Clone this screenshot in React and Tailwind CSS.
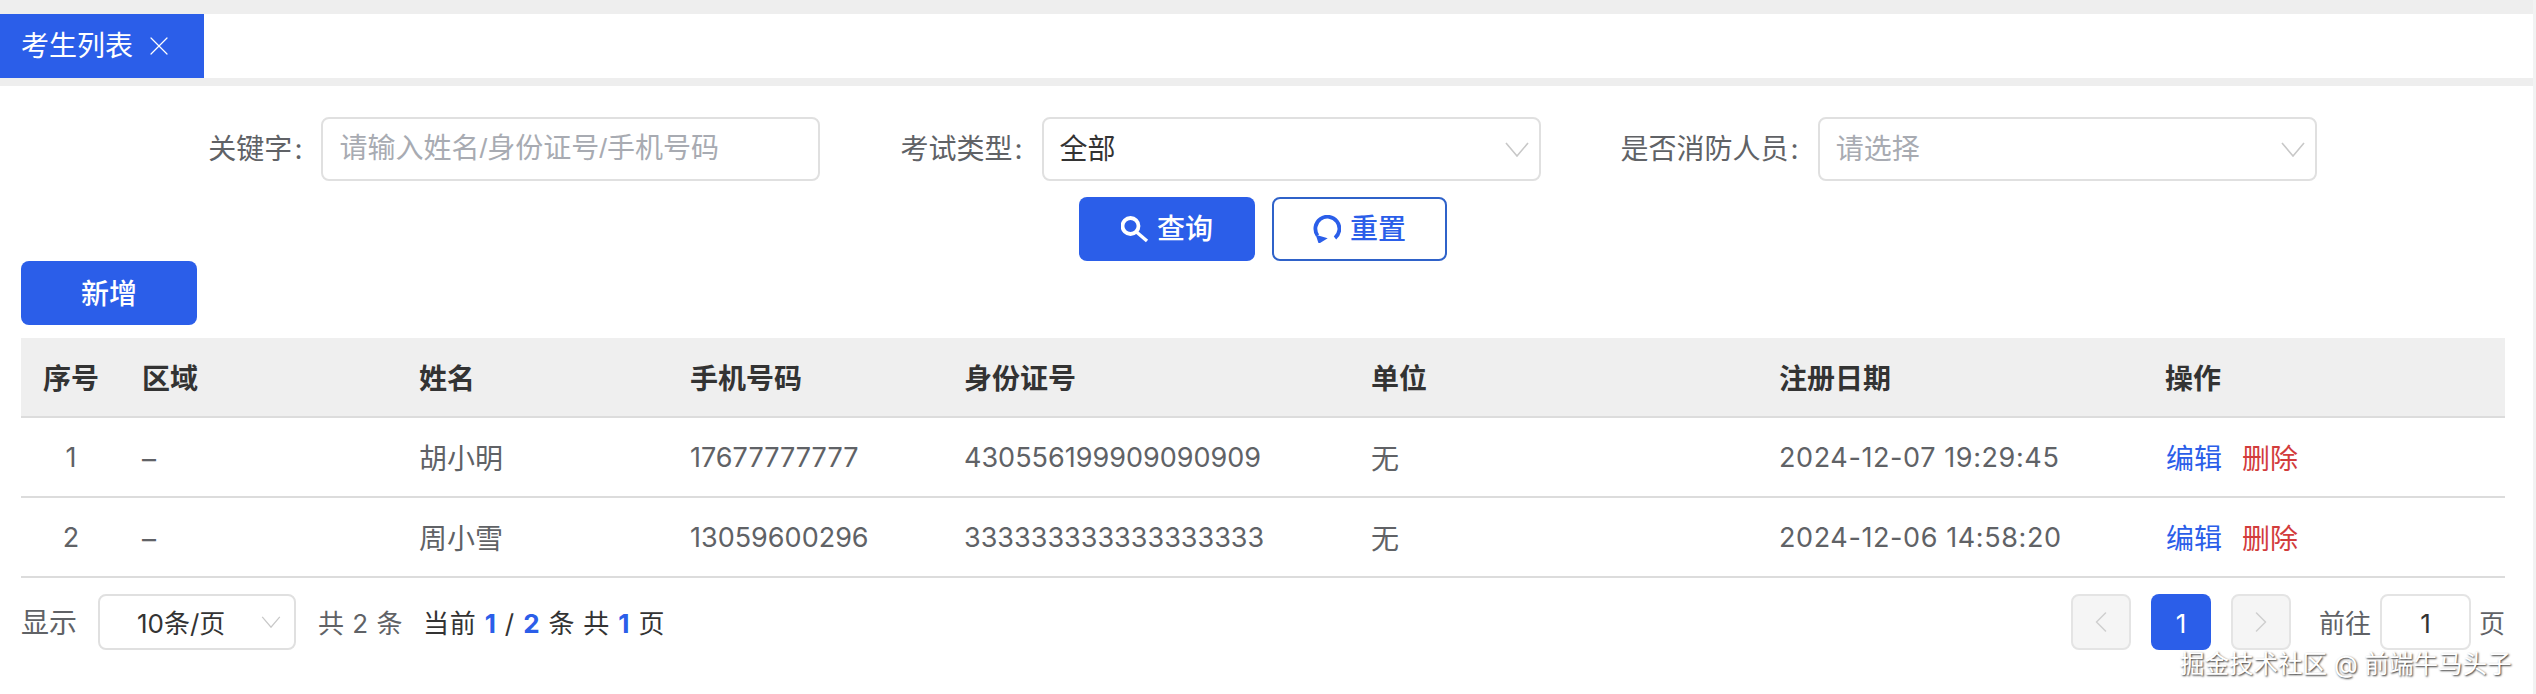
import { ChevronLeft, ChevronRight, X } from 'lucide-react';

const columns = ['序号', '区域', '姓名', '手机号码', '身份证号', '单位', '注册日期', '操作'];

const rows = [
  { id: 1, area: '–', name: '胡小明', phone: '17677777777', idCard: '430556199909090909', unit: '无', date: '2024-12-07 19:29:45' },
  { id: 2, area: '–', name: '周小雪', phone: '13059600296', idCard: '333333333333333333', unit: '无', date: '2024-12-06 14:58:20' },
];

const gridCols = 'grid grid-cols-[100px_277px_271px_274px_407px_408px_386px_361px]';

const SearchIcon = () => (
  <svg viewBox="0 0 28 28" className="w-7 h-7 mr-2" fill="none" stroke="currentColor">
    <circle cx="9.5" cy="11" r="8" strokeWidth="3.8" />
    <path d="M15.5 17L26 26" strokeWidth="3.4" />
  </svg>
);

const ResetIcon = () => (
  <svg viewBox="0 0 28 28" className="w-7 h-7 mr-[9px]" fill="none" stroke="currentColor">
    <path d="M22 23A12 12 0 1 0 4.5 20.5" strokeWidth="3.8" />
    <path d="M2.7 19.7L14.7 23.3L5.7 28.8Z" fill="currentColor" stroke="none" />
  </svg>
);

// 下拉箭头,比图标库的更宽更细
const Arrow = ({ className }) => (
  <svg viewBox="0 0 24 15" className={className} fill="none" stroke="#c8c8c8" strokeWidth="1.6">
    <path d="M1 1L12 14L23 1" />
  </svg>
);

const FormItem = ({ label, children }) => (
  <div className="flex items-center">
    <span className="mr-[19px] text-[#606266]">
      {label}
      <span className="ml-[2px]">:</span>
    </span>
    {children}
  </div>
);

const SelectBox = ({ value, placeholder }) => (
  <div className="flex items-center justify-between w-[499px] h-[64px] pl-[16px] pr-[10px] border-2 border-[#e0e0e0] rounded-lg">
    <span className={value ? 'text-[#333]' : 'text-[#a8abb2]'}>{value || placeholder}</span>
    <Arrow className="w-6 h-[15px]" />
  </div>
);

export default function App() {
  return (
    <div className="relative w-[2536px] h-[694px] overflow-hidden bg-white border-r-[3px] border-[#f2f2f2] text-[28px] text-[#606266] font-['Inter','Noto_Sans_CJK_SC',sans-serif]">
      {/* 顶部标签栏 */}
      <div className="h-[14px] bg-[#eeeeee]"></div>
      <div className="h-[64px] bg-white">
        <div className="flex items-center w-[204px] h-full pl-[21px] bg-[#2b5ee9] text-white">
          <span>考生列表</span>
          <X className="w-8 h-8 ml-[10px]" strokeWidth={0.9} />
        </div>
      </div>
      <div className="h-[8px] bg-[#eeeeee]"></div>

      <div className="pl-[21px] pr-[28px]">
        {/* 查询条件 */}
        <div className="flex justify-center gap-[80px] pt-[31px] pr-[1px]">
          <FormItem label="关键字">
            <div className="flex items-center w-[499px] h-[64px] pl-[16px] border-2 border-[#e0e0e0] rounded-lg text-[#a8abb2] font-['Liberation_Sans','Noto_Sans_CJK_SC',sans-serif]">
              请输入姓名/身份证号/手机号码
            </div>
          </FormItem>
          <FormItem label="考试类型">
            <SelectBox value="全部" />
          </FormItem>
          <FormItem label="是否消防人员">
            <SelectBox placeholder="请选择" />
          </FormItem>
        </div>

        <div className="flex justify-center gap-[17px] mt-[16px] font-medium">
          <button className="flex items-center justify-center w-[176px] h-[64px] rounded-lg bg-[#2b5ee9] text-white">
            <SearchIcon />
            查询
          </button>
          <button className="flex items-center justify-center w-[175px] h-[64px] rounded-lg border-2 border-[#2f62c9] text-[#2b5ee9]">
            <ResetIcon />
            重置
          </button>
        </div>

        <button className="block w-[176px] h-[64px] pt-[2px] rounded-lg bg-[#2b5ee9] text-white font-medium">新增</button>

        {/* 表格 */}
        <div className="mt-[13px]">
          <div className={`${gridCols} h-[80px] pt-[3px] items-center bg-[#efefef] border-b-2 border-[#dcdcdc] font-bold text-[#333]`}>
            {columns.map((col, idx) => (
              <div key={col} className={idx === 0 ? 'text-center' : 'pl-[21px]'}>{col}</div>
            ))}
          </div>
          {rows.map((row) => (
            <div key={row.id} className={`${gridCols} h-[80px] pt-[3px] items-center border-b-2 border-[#dcdcdc]`}>
              <div className="text-center text-[27px]">{row.id}</div>
              <div className="pl-[21px]">{row.area}</div>
              <div className="pl-[21px]">{row.name}</div>
              <div className="pl-[21px] text-[27px]">{row.phone}</div>
              <div className="pl-[21px] text-[27px]">{row.idCard}</div>
              <div className="pl-[21px]">{row.unit}</div>
              <div className="pl-[21px] text-[27px] tracking-[0.6px]">{row.date}</div>
              <div className="flex gap-[20px] pl-[22px]">
                <span className="text-[#2b5ee9]">编辑</span>
                <span className="text-[#d23c3c]">删除</span>
              </div>
            </div>
          ))}
        </div>

        {/* 分页 */}
        <div className="flex items-center justify-between mt-[16px] text-[26px]">
          <div className="flex items-center">
            <span className="pt-[2px] text-[28px]">显示</span>
            <div className="flex items-center justify-between w-[198px] h-[56px] ml-[21px] pl-[37px] pr-[13px] border-2 border-[#e0e0e0] rounded-lg text-[#333]">
              <span className="pt-[2px]">10条/页</span>
              <Arrow className="w-5 h-3" />
            </div>
            <span className="ml-[22px] pt-[2px] tracking-[0.5px]">共 2 条</span>
            <span className="ml-[20px] pt-[2px] tracking-[0.8px] text-[#333]">
              当前 <b className="font-bold text-[#2b5ee9]">1</b> / <b className="font-bold text-[#2b5ee9]">2</b> 条 共 <b className="font-bold text-[#2b5ee9]">1</b> 页
            </span>
          </div>
          <div className="flex items-center">
            <div className="flex items-center justify-center w-[60px] h-[56px] border-2 border-[#e4e4e4] rounded-lg bg-[#f5f5f5] text-[#cfcfcf]">
              <ChevronLeft className="w-9 h-9" strokeWidth={1} />
            </div>
            <div className="flex items-center justify-center w-[60px] h-[56px] ml-[20px] pt-[2px] rounded-lg bg-[#2b5ee9] text-white">1</div>
            <div className="flex items-center justify-center w-[60px] h-[56px] ml-[20px] border-2 border-[#e4e4e4] rounded-lg bg-[#f5f5f5] text-[#cfcfcf]">
              <ChevronRight className="w-9 h-9" strokeWidth={1} />
            </div>
            <span className="ml-[28px] pt-[2px]">前往</span>
            <div className="flex items-center justify-center w-[91px] h-[56px] ml-[9px] pt-[2px] border-2 border-[#e4e4e4] rounded-lg text-[#333]">1</div>
            <span className="ml-[8px] pt-[2px]">页</span>
          </div>
        </div>
      </div>

      {/* 水印 */}
      <div className="absolute left-[2180px] top-[646px] text-[24.5px] text-white [text-shadow:1px_1px_2px_#333] whitespace-nowrap">
        掘金技术社区 @ 前端牛马头子
      </div>
    </div>
  );
}
